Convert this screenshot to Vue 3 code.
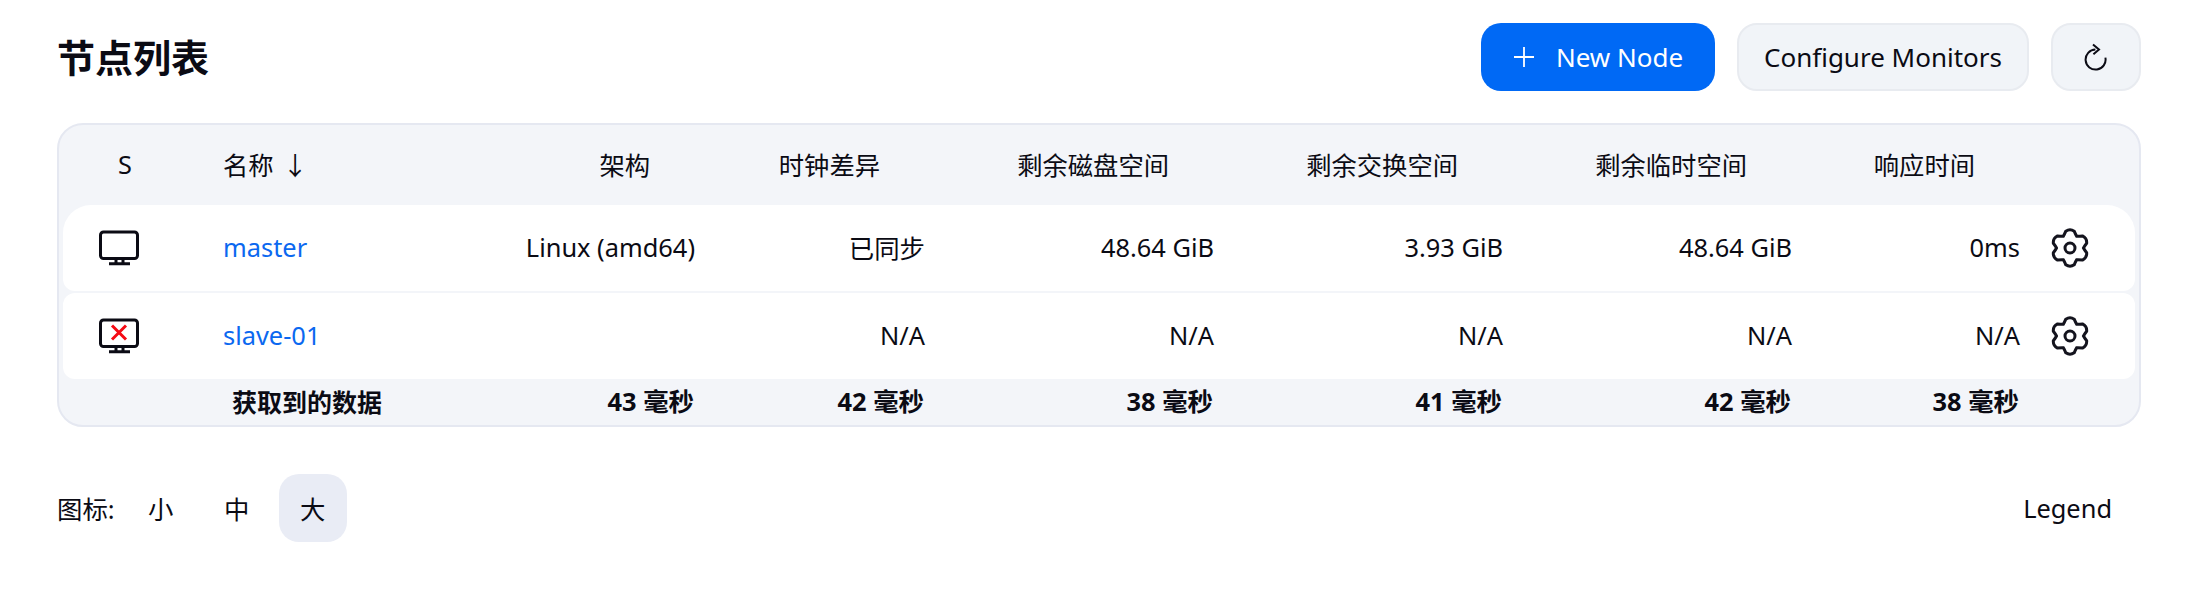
<script setup>
const heads = ['架构', '时钟差异', '剩余磁盘空间', '剩余交换空间', '剩余临时空间', '响应时间']

const nodes = [
  { name: 'master', down: false, cells: ['Linux (amd64)', '已同步', '48.64 GiB', '3.93 GiB', '48.64 GiB', '0ms'] },
  { name: 'slave-01', down: true, cells: ['', 'N/A', 'N/A', 'N/A', 'N/A', 'N/A'] },
]

const timings = ['43 毫秒', '42 毫秒', '38 毫秒', '41 毫秒', '42 毫秒', '38 毫秒']

// six lobed cog, built around the centre of a 24 box
function polar(deg, r) {
  const a = (deg * Math.PI) / 180
  return `${(12 + r * Math.cos(a)).toFixed(2)} ${(12 + r * Math.sin(a)).toFixed(2)}`
}
function cogPath() {
  let d = `M${polar(-120, 8.1)}`
  for (let i = 0; i < 6; i++) {
    const a = -90 + i * 60
    d += `Q${polar(a - 22, 8.8)} ${polar(a - 14, 10.4)}`
    d += `Q${polar(a, 11.8)} ${polar(a + 14, 10.4)}`
    d += `Q${polar(a + 22, 8.8)} ${polar(a + 30, 8.1)}`
  }
  return d + 'Z'
}
const cog = cogPath()
</script>

<template>
  <div class="page">
    <header class="top">
      <h1>节点列表</h1>
      <div class="actions">
        <button class="btn primary">
          <svg class="plus" viewBox="0 0 22 22" width="22" height="22">
            <path d="M11 1v20M1 11h20" />
          </svg>
          New Node
        </button>
        <button class="btn">Configure Monitors</button>
        <button class="btn square">
          <svg class="reload" viewBox="0 0 26 28" width="26" height="28">
            <path d="M22.4 14.6A10 10 0 1 1 12.4 6.6" />
            <path d="M10 1.4l6 5.2-5.6 4.6" />
          </svg>
        </button>
      </div>
    </header>

    <section class="table">
      <div class="grid head">
        <div class="status-head">S</div>
        <div class="name-head">名称<span class="arrow">↓</span></div>
        <div v-for="h in heads" :key="h" class="num head-num">{{ h }}</div>
        <div></div>
      </div>

      <div v-for="node in nodes" :key="node.name" class="grid row">
        <div class="status">
          <svg viewBox="0 0 40 36" width="40" height="36" class="monitor">
            <rect x="1.5" y="2" width="37" height="26.5" rx="3" />
            <path d="M17 28.5v5M24 28.5v5M10 33.8h21" />
            <path v-if="node.down" class="cross" d="M13 7.5l14 14M27 7.5l-14 14" />
          </svg>
        </div>
        <a class="name">{{ node.name }}</a>
        <div v-for="(c, i) in node.cells" :key="i" class="num">{{ c }}</div>
        <div class="cfg">
          <svg viewBox="0 0 24 24" width="40" height="40" class="gear">
            <path :d="cog" />
            <circle cx="12" cy="12" r="3" />
          </svg>
        </div>
      </div>

      <div class="grid foot">
        <div></div>
        <div class="foot-label">获取到的数据</div>
        <div v-for="(t, i) in timings" :key="i" class="num">{{ t }}</div>
        <div></div>
      </div>
    </section>

    <footer class="bottom">
      <div class="sizes">
        <span class="sizes-label">图标:</span>
        <button class="size">小</button>
        <button class="size">中</button>
        <button class="size on">大</button>
      </div>
      <button class="legend">Legend</button>
    </footer>
  </div>
</template>

<style>
body {
  background: #fff;
}
</style>

<style scoped>
.page {
  padding: 23px 44px 0 57px;
  font-family: "Noto Sans", "Noto Sans CJK SC", sans-serif;
  font-size: 25.4px;
  color: #0b0b14;
}

.top {
  display: flex;
  align-items: center;
  justify-content: space-between;
  height: 68px;
  margin-bottom: 32px;
}

h1 {
  margin: 0;
  font-size: 38px;
  line-height: 1;
  font-weight: 700;
}

.actions {
  display: flex;
  gap: 22px;
}

.btn {
  display: flex;
  align-items: center;
  justify-content: center;
  height: 68px;
  width: 292px;
  box-sizing: border-box;
  border: 2px solid #e8ebf0;
  border-radius: 20px;
  background: #f1f4f8;
  color: inherit;
  font: inherit;
  font-size: 26px;
}

.btn.primary {
  width: 234px;
  gap: 21px;
  border: 0;
  background: #0069f5;
  color: #fff;
}

.btn.square {
  width: 90px;
}

.plus,
.reload {
  fill: none;
  stroke: currentColor;
  stroke-width: 2;
}

.plus {
  stroke-width: 1.8;
}

.table {
  border: 2px solid #e5e8f1;
  border-radius: 26px;
  background: #f3f5f9;
  padding: 0 4px;
}

.grid {
  display: grid;
  grid-template-columns: 160px 277px 195px 230px 289px 289px 289px 228px 1fr;
  align-items: center;
}

.head {
  height: 80px;
  padding-bottom: 2px;
  box-sizing: border-box;
  font-size: 25.3px;
}

.status-head {
  padding-left: 55px;
}

.arrow {
  margin-left: 9px;
}

.num {
  text-align: right;
}

.head-num {
  padding-right: 45px;
}

.row {
  height: 86px;
  background: #fff;
  border-radius: 12px;
  margin-bottom: 2px;
}

.row > .num,
.row > .name {
  padding-bottom: 2px;
}

.row:nth-child(2) {
  border-radius: 28px 28px 12px 12px;
}

.status {
  display: flex;
  padding-left: 36px;
}

.monitor {
  fill: none;
  stroke: #0b0b14;
  stroke-width: 3;
}

.monitor .cross {
  stroke: #f50a14;
}

.name {
  color: #0b68f0;
}

.cfg {
  display: flex;
  padding-left: 30px;
}

.gear {
  fill: none;
  stroke: #14141e;
  stroke-width: 1.8;
}

.foot {
  height: 46px;
  margin-top: -2px;
  font-weight: 700;
}

.foot .num {
  padding-right: 1px;
  padding-bottom: 4px;
}

.foot-label {
  padding-left: 9px;
  padding-bottom: 2px;
  font-size: 25px;
}

.bottom {
  display: flex;
  align-items: center;
  justify-content: space-between;
  margin-top: 47px;
}

.sizes {
  display: flex;
  align-items: center;
  gap: 8px;
}

.sizes-label {
  margin-right: 4px;
}

.size {
  width: 68px;
  height: 68px;
  border: 0;
  border-radius: 20px;
  background: transparent;
  color: inherit;
  font: inherit;
}

.size.on {
  background: #e9ecf5;
}

.legend {
  height: 68px;
  padding: 0 29px;
  border: 0;
  background: transparent;
  color: inherit;
  font: inherit;
}
</style>
